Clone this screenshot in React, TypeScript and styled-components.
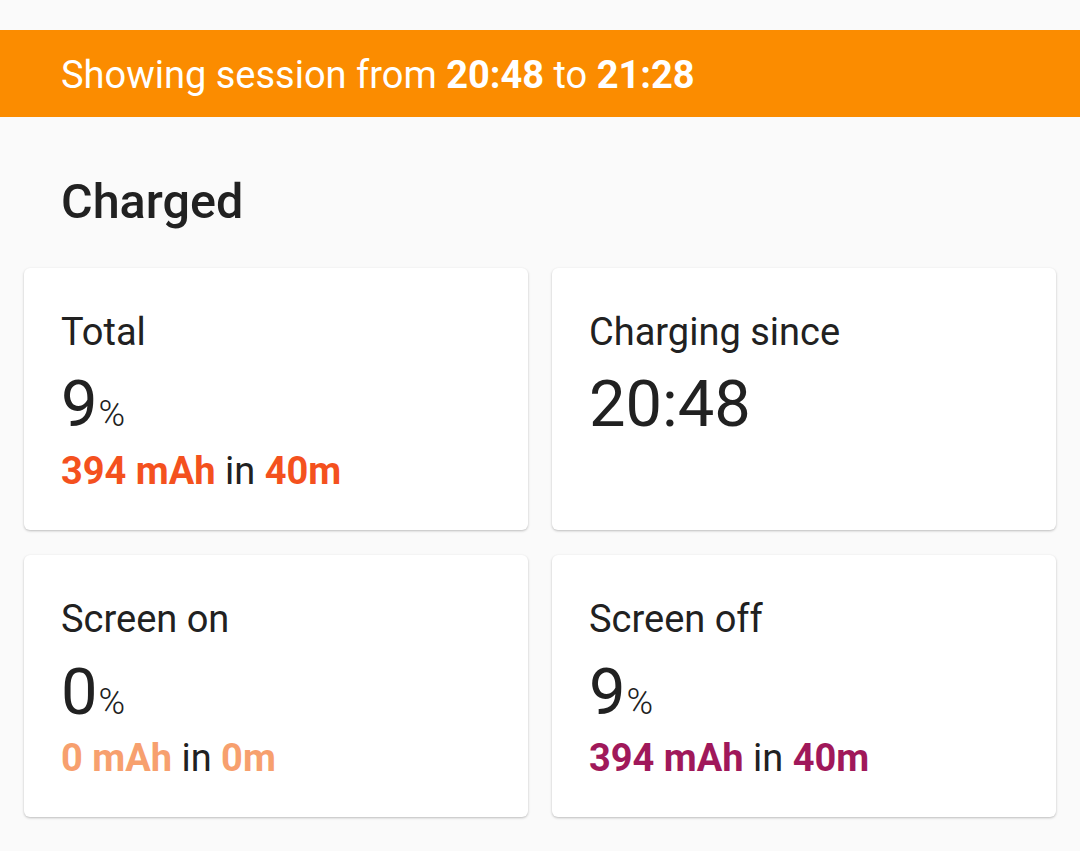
import React from "react";
import styled, { createGlobalStyle } from "styled-components";

const GlobalStyle = createGlobalStyle`
  html, body {
    margin: 0;
    padding: 0;
    background: #fafafa;
  }
  body {
    font-family: Roboto, "Noto Sans", "Liberation Sans", sans-serif;
    color: #212121;
    -webkit-font-smoothing: antialiased;
  }
`;

const Page = styled.div`
  width: 1080px;
  min-height: 851px;
  background: #fafafa;
  padding-top: 30px;
  box-sizing: border-box;
`;

const Banner = styled.div`
  height: 87px;
  box-sizing: border-box;
  background: #fb8c00;
  color: #ffffff;
  display: flex;
  align-items: center;
  padding: 4px 61px 0;
  font-size: 38px;
  line-height: 1.172;
  font-weight: 400;
  b {
    font-weight: 700;
  }
`;

const Heading = styled.h2`
  margin: 0;
  padding: 57px 61px 0;
  font-size: 48.5px;
  line-height: 1.172;
  font-weight: 500;
  color: #212121;
`;

const Grid = styled.div`
  display: grid;
  grid-template-columns: 1fr 1fr;
  gap: 25px 24px;
  padding: 37px 24px 0;
`;

const Card = styled.div`
  background: #ffffff;
  border-radius: 6px;
  box-shadow: 0 1px 3px rgba(0, 0, 0, 0.16), 0 1px 2px rgba(0, 0, 0, 0.1);
  padding: 42px 37px 37px;
  display: flex;
  flex-direction: column;
`;

const Label = styled.div`
  font-size: 38px;
  line-height: 1.172;
  color: #212121;
`;

const Value = styled.div`
  margin-top: 12px;
  font-size: 65px;
  line-height: 1.172;
  color: #212121;
  font-weight: 400;
`;

const Unit = styled.span`
  font-size: 36px;
  font-weight: 300;
  margin-left: 1px;
`;

const Detail = styled.div`
  margin-top: 6px;
  font-size: 38px;
  line-height: 1.172;
  color: #212121;
`;

const Em = styled.b<{ $color: string }>`
  font-weight: 700;
  color: ${(p) => p.$color};
`;

type Stat = {
  label: string;
  pct: string;
  mah: string;
  time: string;
  color: string;
};

const StatCard = ({ s }: { s: Stat }) => (
  <Card>
    <Label>{s.label}</Label>
    <Value>
      {s.pct}
      <Unit>%</Unit>
    </Value>
    <Detail>
      <Em $color={s.color}>{s.mah} mAh</Em> in <Em $color={s.color}>{s.time}</Em>
    </Detail>
  </Card>
);

export default function App() {
  return (
    <>
      <GlobalStyle />
      <Page>
        <Banner>
          <span>
            Showing session from <b>20:48</b> to <b>21:28</b>
          </span>
        </Banner>
        <Heading>Charged</Heading>
        <Grid>
          <StatCard s={{ label: "Total", pct: "9", mah: "394", time: "40m", color: "#f4511e" }} />
          <Card>
            <Label>Charging since</Label>
            <Value>20:48</Value>
          </Card>
          <StatCard s={{ label: "Screen on", pct: "0", mah: "0", time: "0m", color: "#f7a06e" }} />
          <StatCard s={{ label: "Screen off", pct: "9", mah: "394", time: "40m", color: "#a0185a" }} />
        </Grid>
      </Page>
    </>
  );
}
